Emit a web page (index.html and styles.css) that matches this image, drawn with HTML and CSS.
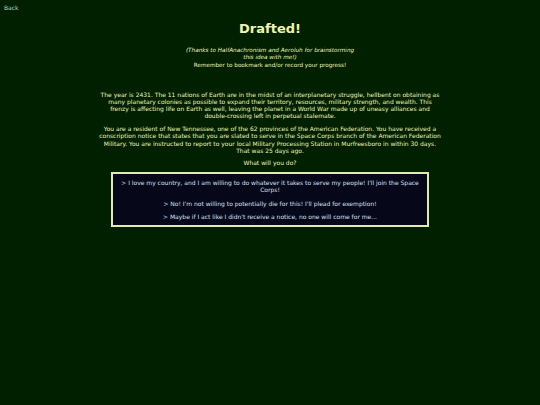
FILE: index.html
```html
<!DOCTYPE html>
<html lang="en">
<head>
  <meta charset="UTF-8">
  <meta name="viewport" content="width=device-width, initial-scale=1.0">
  <title>Drafted!</title>
  <link rel="stylesheet" href="styles.css">
</head>
<body>
  <a class="back" href="#">Back</a>

  <div class="story">
    <h1>Drafted!</h1>
    <p class="credits">
      <em>(Thanks to HalfAnachronism and Aeroluh for brainstorming this idea with me!)</em><br>
      Remember to bookmark and/or record your progress!
    </p>

    <div class="passage">
      <p>The year is 2431. The 11 nations of Earth are in the midst of an interplanetary struggle, hellbent on obtaining as many planetary colonies as possible to expand their territory, resources, military strength, and wealth. This frenzy is affecting life on Earth as well, leaving the planet in a World War made up of uneasy alliances and double-crossing left in perpetual stalemate.</p>
      <p>You are a resident of New Tennessee, one of the 62 provinces of the American Federation. You have received a conscription notice that states that you are slated to serve in the Space Corps branch of the American Federation Military. You are instructed to report to your local Military Processing Station in Murfreesboro in within 30 days. That was 25 days ago.</p>
      <p>What will you do?</p>
    </div>

    <div class="choices">
      <a href="#">&gt; I love my country, and I am willing to do whatever it takes to serve my people! I'll join the Space Corps!</a>
      <a href="#">&gt; No! I'm not willing to potentially die for this! I'll plead for exemption!</a>
      <a href="#">&gt; Maybe if I act like I didn't receive a notice, no one will come for me...</a>
    </div>
  </div>
</body>
</html>
```

FILE: styles.css
```css
body {
  margin: 0;
  padding: 0;
  background: #002000;
  color: #eef2bc;
  font-family: "DejaVu Sans", Verdana, sans-serif;
  font-size: 6px;
  line-height: 7.2px;
}
a {
  text-decoration: none;
}
.back {
  display: block;
  padding: 4px 4px 0;
  color: #a8d8c0;
}
.story {
  width: 344px;
  margin: 0 auto;
  text-align: center;
}
h1 {
  margin: 10px 0 0;
  font-size: 13px;
  line-height: 16px;
  color: #f0f4b0;
}
.credits {
  width: 172px;
  margin: 10px auto 0;
  font-size: 5.7px;
}
.passage {
  margin-top: 22px;
}
.passage p {
  margin: 0 0 5.5px;
}
.choices {
  width: 300px;
  margin: 0 auto;
  padding: 5px 7px;
  background: #07071a;
  border: 2px solid #e3eab0;
}
.choices a {
  display: block;
  margin-bottom: 6px;
  color: #d2e0f2;
}
.choices a:last-child {
  margin-bottom: 0;
}
```
